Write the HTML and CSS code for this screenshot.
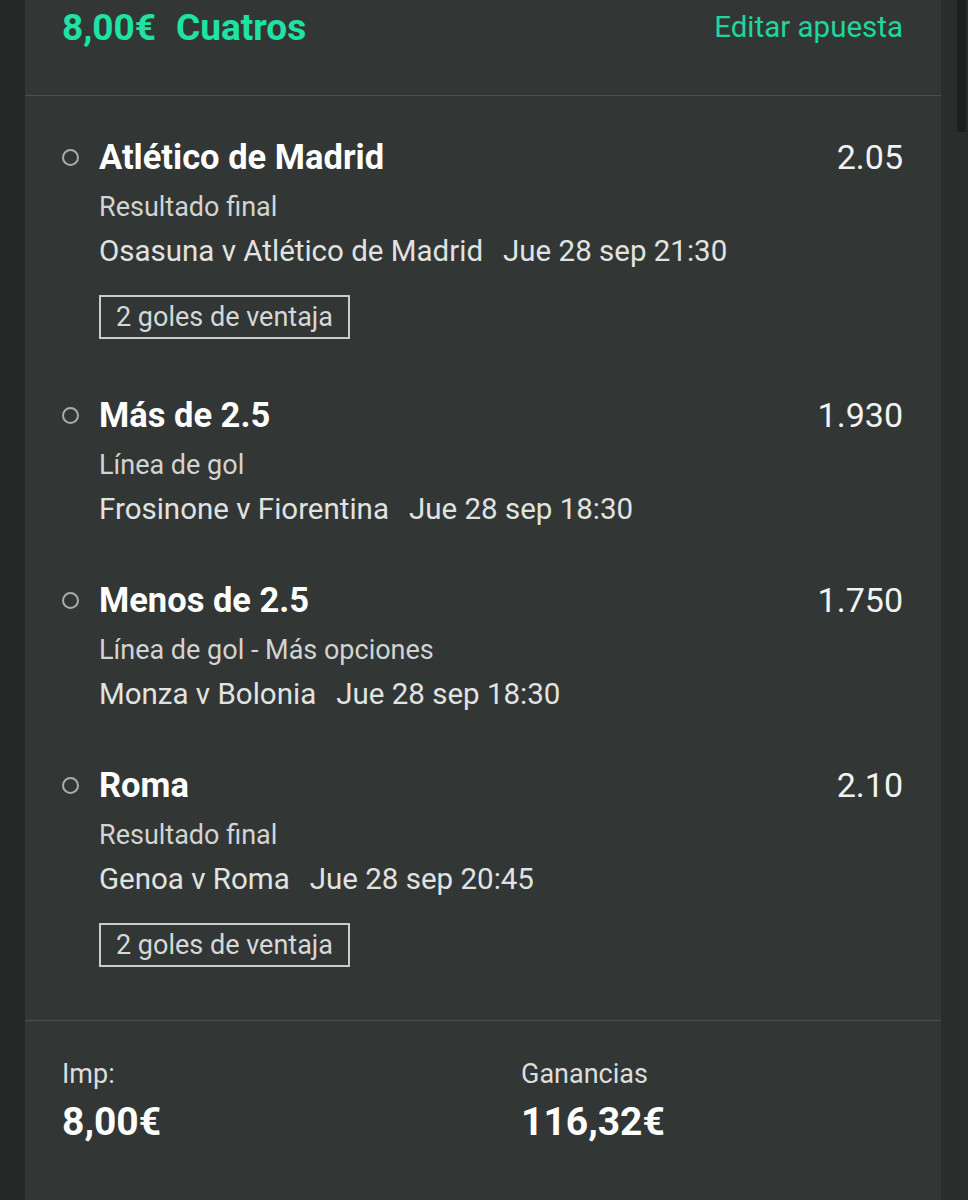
FILE: index.html
```html
<!DOCTYPE html>
<html>
  <head>
    <meta charset="UTF-8">
    <title>Cuatros</title>
    <link rel="stylesheet" href="styles.css">
  </head>
  <body>
    <div class="screen">
      <div class="slip">
        <div class="slip-header">
          <div class="slip-title"><span>8,00€</span><span>Cuatros</span></div>
          <div class="slip-edit">Editar apuesta</div>
        </div>

        <div class="bets">
          <div class="bet">
            <div class="bet-top">
              <span class="dot"></span>
              <span class="bet-name">Atlético de Madrid</span>
              <span class="bet-odds">2.05</span>
            </div>
            <div class="bet-market">Resultado final</div>
            <div class="bet-match"><span>Osasuna v Atlético de Madrid</span><span>Jue 28 sep 21:30</span></div>
            <div class="bet-tag">2 goles de ventaja</div>
          </div>

          <div class="bet">
            <div class="bet-top">
              <span class="dot"></span>
              <span class="bet-name">Más de 2.5</span>
              <span class="bet-odds">1.930</span>
            </div>
            <div class="bet-market">Línea de gol</div>
            <div class="bet-match"><span>Frosinone v Fiorentina</span><span>Jue 28 sep 18:30</span></div>
          </div>

          <div class="bet">
            <div class="bet-top">
              <span class="dot"></span>
              <span class="bet-name">Menos de 2.5</span>
              <span class="bet-odds">1.750</span>
            </div>
            <div class="bet-market">Línea de gol - Más opciones</div>
            <div class="bet-match"><span>Monza v Bolonia</span><span>Jue 28 sep 18:30</span></div>
          </div>

          <div class="bet">
            <div class="bet-top">
              <span class="dot"></span>
              <span class="bet-name">Roma</span>
              <span class="bet-odds">2.10</span>
            </div>
            <div class="bet-market">Resultado final</div>
            <div class="bet-match"><span>Genoa v Roma</span><span>Jue 28 sep 20:45</span></div>
            <div class="bet-tag">2 goles de ventaja</div>
          </div>
        </div>

        <div class="slip-footer">
          <div class="total">
            <div class="total-label">Imp:</div>
            <div class="total-value">8,00€</div>
          </div>
          <div class="total">
            <div class="total-label">Ganancias</div>
            <div class="total-value">116,32€</div>
          </div>
        </div>
      </div>
      <div class="gutter">
        <div class="scrollbar"></div>
      </div>
    </div>
  </body>
</html>
```

FILE: styles.css
```css
body {
  margin: 0;
  background: #262727;
  font-family: Roboto, "Liberation Sans", sans-serif;
  color: #fff;
}

.screen {
  display: flex;
  height: 1200px;
  padding-left: 25px;
}

.slip {
  width: 916px;
  background: #323635;
}

.gutter {
  flex: 1;
  background: #2b2c2c;
  padding-left: 16px;
}

.scrollbar {
  width: 9px;
  height: 132px;
  background: #1e1f1f;
}

.slip-header {
  display: flex;
  justify-content: space-between;
  align-items: center;
  height: 54px;
  padding: 0 38px 41px 37px;
  border-bottom: 1px solid #4b504e;
}

.slip-title {
  display: flex;
  gap: 20px;
  font-size: 37px;
  font-weight: bold;
  color: #1fe3a3;
}

.slip-edit {
  font-size: 29.5px;
  color: #1fd69c;
}

.bets {
  padding: 41px 38px 0 37px;
  border-bottom: 1px solid #4b504e;
}

.bet {
  padding-bottom: 47px;
}

.bet:last-child {
  padding-bottom: 44px;
}

.bet-top {
  display: flex;
  align-items: center;
  height: 40px;
}

.dot {
  width: 13px;
  height: 13px;
  border: 2px solid #a9acab;
  border-radius: 50%;
  margin: 0 20px 0 0;
}

.bet-name {
  flex: 1;
  font-size: 34.5px;
  font-weight: bold;
}

.bet-odds {
  font-size: 34px;
  color: #f2f2f2;
}

.bet-market {
  margin-top: 10px;
  padding-left: 37px;
  font-size: 27px;
  line-height: 40px;
  color: #d2d4d3;
}

.bet-match {
  display: flex;
  gap: 20px;
  padding-left: 37px;
  font-size: 29.5px;
  line-height: 48px;
  color: #e1e3e2;
}

.bet-tag {
  display: inline-block;
  margin: 20px 0 9px 37px;
  padding: 0 15px;
  border: 2px solid #c9cccb;
  font-size: 27px;
  line-height: 40px;
  color: #d6d8d7;
}

.slip-footer {
  display: grid;
  grid-template-columns: 459px 1fr;
  padding: 35px 38px 0 37px;
}

.total-label {
  font-size: 27px;
  line-height: 36px;
  color: #dcdedd;
}

.total-value {
  margin-top: 6px;
  font-size: 39px;
  font-weight: bold;
  line-height: 48px;
}
```
